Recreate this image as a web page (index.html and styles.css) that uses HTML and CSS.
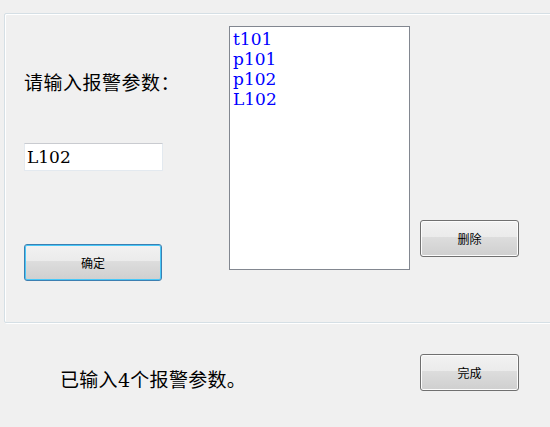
FILE: index.html
```html
<!DOCTYPE html>
<html lang="zh-CN">
<head>
<meta charset="utf-8">
<title>报警参数</title>
<link rel="stylesheet" href="styles.css">
</head>
<body>
<div class="window">
  <div class="group">
    <div class="left-col">
      <div class="prompt">请输入报警参数：</div>
      <div class="textbox">L102</div>
      <button class="btn btn-focus btn-ok">确定</button>
    </div>
    <div class="listbox">
      <div class="item">t101</div>
      <div class="item">p101</div>
      <div class="item">p102</div>
      <div class="item">L102</div>
    </div>
    <div class="right-col">
      <button class="btn btn-side">删除</button>
    </div>
  </div>
  <div class="footer">
    <div class="status">已输入4个报警参数。</div>
    <button class="btn btn-side">完成</button>
  </div>
</div>
</body>
</html>
```

FILE: styles.css
```css
* { box-sizing: border-box; }
html, body {
  margin: 0;
  padding: 0;
  background: #f0f0f0;
  width: 550px;
  height: 427px;
  overflow: hidden;
}
.window {
  width: 550px;
  height: 427px;
  overflow: hidden;
  font-family: "DejaVu Serif", "Noto Sans CJK SC", serif;
  color: #000;
}
.group {
  margin: 13px 0 0 4px;
  width: 560px;
  height: 310px;
  border: 1px solid #d5dfe5;
  border-radius: 2px;
  box-shadow: inset 1px 1px 0 #fff, 1px 1px 0 #fff;
  display: flex;
  align-items: flex-start;
}
.left-col {
  margin-left: 19px;
  width: 139px;
  display: flex;
  flex-direction: column;
}
.prompt {
  margin-top: 59px;
  font-size: 19px;
  line-height: 20px;
  white-space: nowrap;
  letter-spacing: 0.5px;
}
.textbox {
  margin-top: 50px;
  height: 28px;
  width: 139px;
  background: #fff;
  border: 1px solid #e3e9ef;
  border-top-color: #c9cbd0;
  font-size: 17px;
  line-height: 26px;
  padding-left: 2px;
}
.btn {
  font-family: "Noto Sans CJK SC", "Noto Sans", sans-serif;
  font-size: 12px;
  color: #000;
  height: 37px;
  border: 1px solid #707070;
  border-radius: 3px;
  background: linear-gradient(#f2f2f2 0%, #ebebeb 45%, #dddddd 46%, #cfcfcf 100%);
  box-shadow: inset 0 0 0 1px #fcfcfc;
  padding: 0;
  margin: 0;
  line-height: 35px;
}
.btn-focus {
  border-color: #3c7fb1;
  box-shadow: inset 0 0 0 1px #48c8f8;
}
.btn-ok {
  margin-top: 73px;
  width: 138px;
}
.listbox {
  margin-left: 66px;
  margin-top: 12px;
  width: 181px;
  height: 244px;
  background: #fff;
  border: 1px solid #828790;
  padding: 2px 0 0 3px;
  color: #0000ff;
  font-size: 17px;
}
.item {
  line-height: 20px;
  height: 20px;
}
.right-col {
  margin-left: 10px;
  margin-top: 206px;
}
.btn-side {
  width: 99px;
}
.footer {
  display: flex;
  align-items: flex-start;
  padding-top: 31px;
}
.status {
  margin-left: 60px;
  width: 360px;
  margin-top: 16px;
  font-size: 19px;
  line-height: 20px;
  white-space: nowrap;
  letter-spacing: 0.3px;
}
```
